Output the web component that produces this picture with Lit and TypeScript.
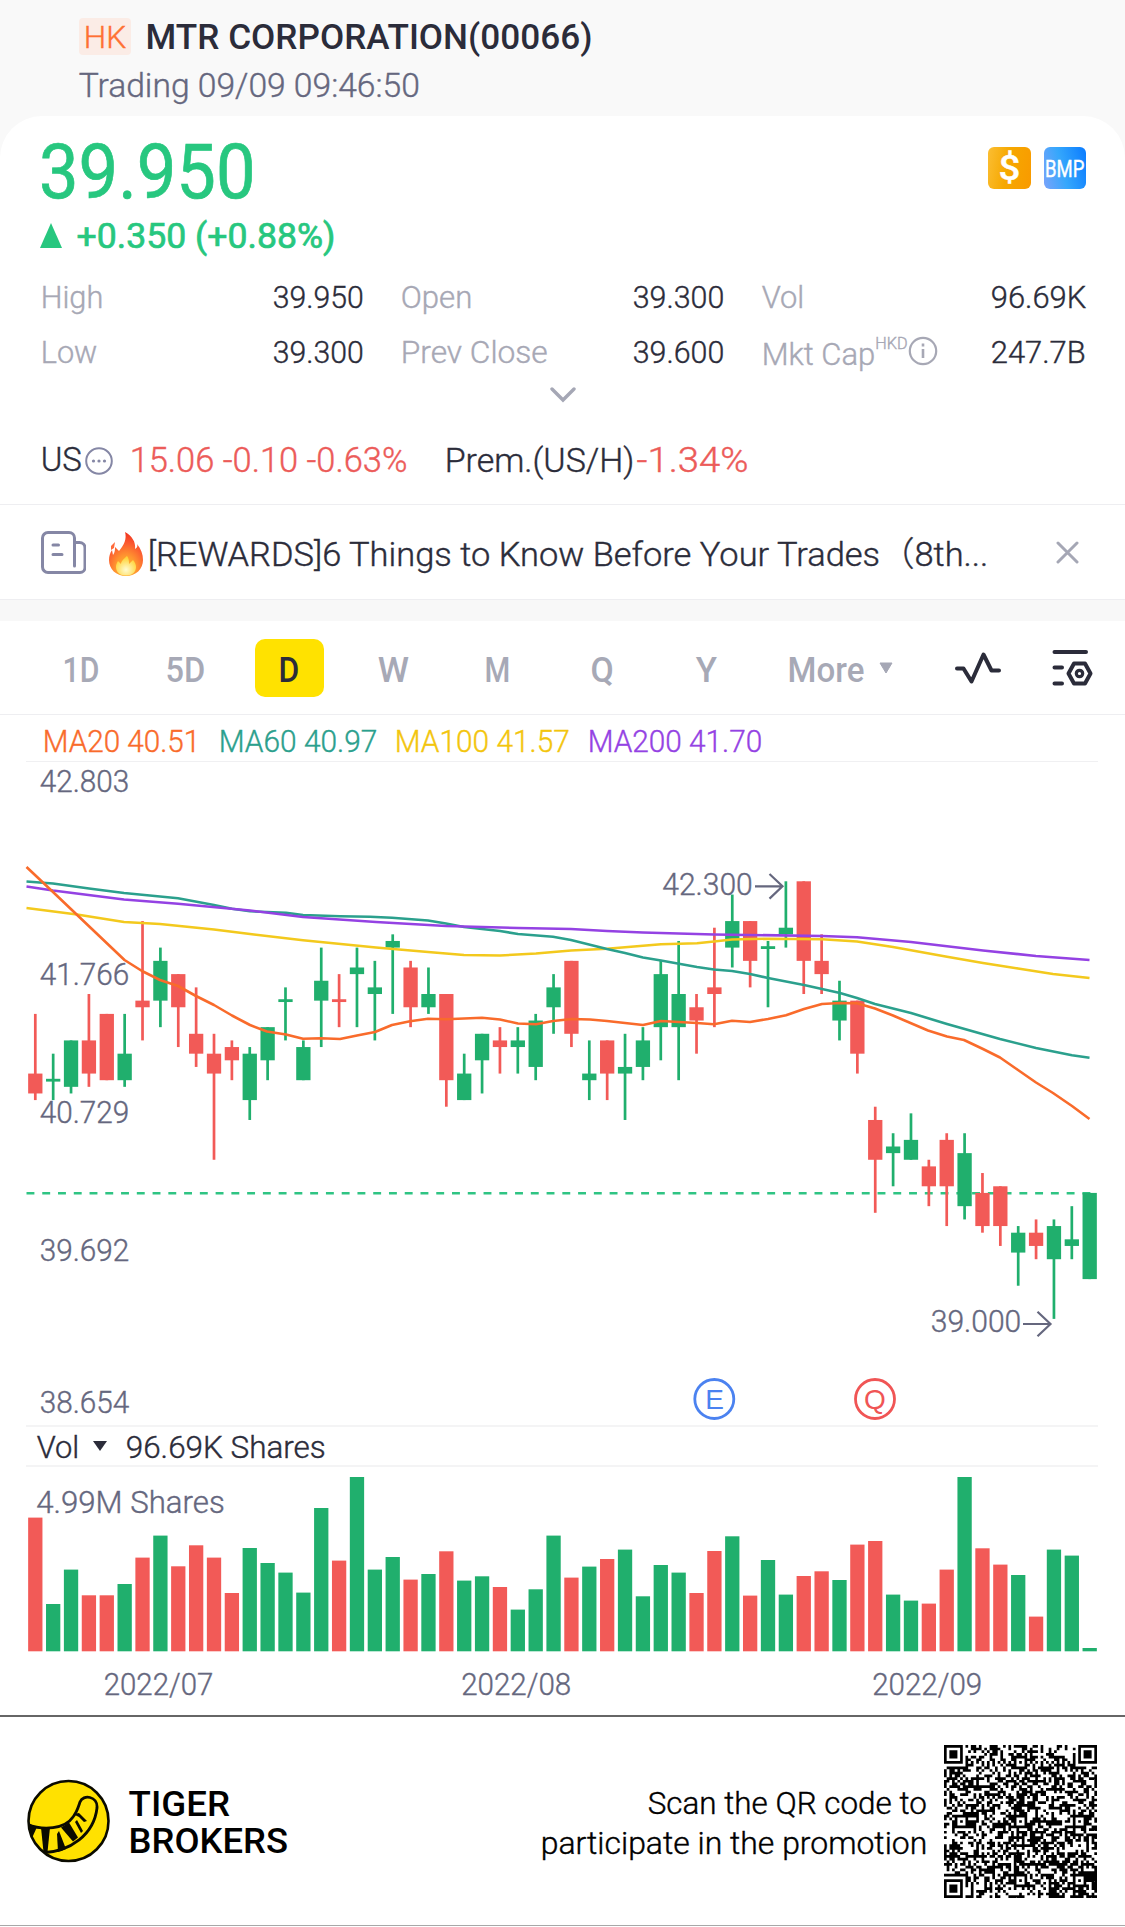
import { html, svg, css, LitElement } from 'lit';
import { customElement, property, state } from 'lit/decorators.js';
import { classMap } from 'lit/directives/class-map.js';

// share of the em taken by capitals
const CAP = 0.711;

// One line of text squeezed to a given ink width; its box is exactly the cap height.
function fit(text: string, width: number, cap: number) {
  const size = cap / CAP;
  const bearing = size * 0.04;
  return html`<svg class="fit" width=${width} height=${cap}>
    <text
      x=${-bearing}
      y=${cap}
      font-size=${size}
      textLength=${width + bearing * 2}
      lengthAdjust="spacingAndGlyphs"
    >${text}</text>
  </svg>`;
}

// Same squeeze, for labels placed inside a chart
function label(text: string, x: number, base: number, width: number, cap = 22.5) {
  const size = cap / CAP;
  const bearing = size * 0.04;
  return svg`<text class="label" x=${x - bearing} y=${base} font-size=${size}
    textLength=${width + bearing * 2} lengthAdjust="spacingAndGlyphs">${text}</text>`;
}

const fitStyles = css`
  .fit {
    display: block;
    flex: none;
    overflow: visible;
  }

  .fit text {
    fill: currentColor;
    stroke: currentColor;
    stroke-width: 0.4;
    white-space: pre;
  }
`;

// [color, high, body top, body bottom, low, volume bar]
type Candle = [string, number, number, number, number, number];

const CANDLES: Candle[] = [
  ['r', 41.3, 40.85, 40.7, 40.65, 133.7],
  ['g', 41.0, 40.8, 40.8, 40.65, 47.3],
  ['g', 41.1, 41.1, 40.75, 40.7, 81.7],
  ['r', 41.45, 41.1, 40.85, 40.75, 56],
  ['r', 41.3, 41.3, 40.8, 40.8, 56],
  ['g', 41.3, 41.0, 40.8, 40.75, 67.3],
  ['r', 42.0, 41.4, 41.35, 41.1, 93.7],
  ['g', 41.8, 41.7, 41.4, 41.2, 115.7],
  ['r', 41.6, 41.6, 41.35, 41.05, 85],
  ['r', 41.5, 41.15, 41.0, 40.9, 106],
  ['r', 41.15, 41.0, 40.85, 40.2, 93.7],
  ['r', 41.1, 41.05, 40.95, 40.8, 58.3],
  ['g', 41.05, 41.0, 40.65, 40.5, 103.3],
  ['g', 41.2, 41.2, 40.95, 40.8, 88.3],
  ['g', 41.5, 41.4, 41.4, 41.1, 78.7],
  ['g', 41.1, 41.05, 40.8, 40.8, 58.7],
  ['g', 41.8, 41.55, 41.4, 41.05, 143.3],
  ['r', 41.6, 41.4, 41.4, 41.2, 90.7],
  ['g', 41.8, 41.65, 41.6, 41.2, 174.3],
  ['g', 41.7, 41.5, 41.45, 41.1, 81.7],
  ['g', 41.9, 41.85, 41.8, 41.3, 94.3],
  ['r', 41.7, 41.65, 41.35, 41.2, 71.7],
  ['g', 41.65, 41.45, 41.35, 41.3, 77.3],
  ['r', 41.45, 41.45, 40.8, 40.6, 100],
  ['g', 41.0, 40.85, 40.65, 40.65, 70.7],
  ['g', 41.15, 41.15, 40.95, 40.7, 75],
  ['r', 41.2, 41.1, 41.05, 40.85, 64.3],
  ['g', 41.2, 41.1, 41.05, 40.85, 41.7],
  ['g', 41.3, 41.25, 40.9, 40.8, 62],
  ['g', 41.6, 41.5, 41.35, 41.15, 115.7],
  ['r', 41.7, 41.7, 41.15, 41.05, 73.7],
  ['g', 41.1, 40.85, 40.8, 40.65, 84.7],
  ['r', 41.1, 41.1, 40.85, 40.65, 92.3],
  ['g', 41.15, 40.9, 40.85, 40.5, 101.7],
  ['g', 41.2, 41.1, 40.9, 40.8, 55],
  ['g', 41.7, 41.6, 41.2, 40.95, 86.3],
  ['g', 41.85, 41.45, 41.2, 40.8, 78.7],
  ['r', 41.45, 41.35, 41.25, 41.0, 58.3],
  ['r', 41.95, 41.5, 41.45, 41.2, 100.3],
  ['g', 42.2, 42.0, 41.8, 41.65, 115],
  ['r', 42.0, 42.0, 41.7, 41.5, 55.7],
  ['g', 41.85, 41.8, 41.8, 41.35, 91.3],
  ['g', 42.3, 41.95, 41.9, 41.8, 56.7],
  ['r', 42.3, 42.3, 41.7, 41.45, 75.3],
  ['r', 41.9, 41.7, 41.6, 41.45, 80],
  ['g', 41.55, 41.4, 41.25, 41.1, 71.3],
  ['r', 41.4, 41.4, 41.0, 40.85, 106.7],
  ['r', 40.6, 40.5, 40.2, 39.8, 110.3],
  ['g', 40.4, 40.3, 40.25, 40.0, 56.7],
  ['g', 40.55, 40.35, 40.2, 40.2, 50.7],
  ['r', 40.2, 40.15, 40.0, 39.85, 47.7],
  ['r', 40.4, 40.35, 40.0, 39.7, 81.7],
  ['g', 40.4, 40.25, 39.85, 39.75, 174.3],
  ['r', 40.1, 39.95, 39.7, 39.65, 103],
  ['r', 40.0, 40.0, 39.7, 39.55, 86.7],
  ['g', 39.7, 39.65, 39.5, 39.25, 76.3],
  ['r', 39.75, 39.65, 39.55, 39.45, 34.7],
  ['g', 39.75, 39.7, 39.45, 39.0, 101.7],
  ['g', 39.85, 39.6, 39.55, 39.45, 95.7],
  ['g', 39.95, 39.95, 39.3, 39.3, 3.3],
];

const AVERAGES = [
  {
    color: '#f3c91d',
    points:
      '26.5,908 77,914.5 124,922 160,924 214,929.5 250,934 303,940.3 376,947.5 428,952 464,955 500,955.5 536,953.5 571,950.5 607,948.8 661,944.3 697,943.3 714,941.5 732,939.5 768,938.7 822,939.3 857,941.5 893,947 947,956.7 983,963 1018,968.5 1053,974 1089.5,978',
  },
  {
    color: '#2ba08d',
    points:
      '26.5,881.5 53,883.5 89,888.5 124,893 178,898.3 214,905 232,908.7 250,911.3 286,912.7 303,915 340,916.3 370,916.7 392,917.7 428,920.5 446,923.5 464,927 500,931 518,934 553,936.8 571,940 607,949 625,953 643,957.5 661,960.5 697,967 714,969.5 732,971 750,974 768,978 804,985 840,993 857,998 875,1004 911,1013 947,1024 1000,1039 1036,1048 1072,1055.3 1089.5,1057.7',
  },
  {
    color: '#9442e3',
    points:
      '26.5,886.5 53,890.5 124,899.5 178,903.8 250,910.5 303,917 376,922 446,926 518,928 571,929 607,931 643,932.5 714,934.5 822,936 857,937.3 911,942 983,950.5 1036,956 1089.5,960',
  },
  {
    color: '#f96b2b',
    points:
      '26.5,867 35,875 53,892 124.5,960 142,971 160,980 178,986 196,996 214,1005 232,1015.5 250,1025 267,1031.5 286,1034.5 303,1038.8 321,1038.3 340,1039 357,1035.5 375,1032 392,1025 410,1021.3 428,1018.8 446,1019.3 482,1017.8 500,1019.5 518,1023.5 536,1024.3 553,1021 572,1019 590,1019.5 607,1021 643,1025 661,1021 679,1022 697,1023 714,1024.3 732,1020.7 750,1022 768,1019 786,1015.3 804,1009 822,1004 840,1003 857,1003.2 875,1008.5 893,1015.5 928,1030.5 947,1036.5 964,1040 983,1049 1000,1057.5 1018,1070 1036,1082.5 1053,1093 1072,1106 1089.5,1119',
  },
];

const candleX = (i: number) => 35.3 + i * 17.871;
const priceY = (p: number) => 881.3 + (42.3 - p) * 132.6;

const chartStyles = css`
  :host {
    display: block;
  }

  svg {
    display: block;
  }

  .label {
    fill: #65677e;
    stroke: #65677e;
    stroke-width: 0.4;
  }

  .r {
    fill: #f25a57;
  }

  .g {
    fill: #20af6d;
  }
`;

@customElement('price-chart')
export class PriceChart extends LitElement {
  static styles = [
    chartStyles,
    css`
      .average {
        fill: none;
        stroke-width: 2.6;
        stroke-linejoin: round;
      }

      .arrow {
        fill: none;
        stroke: #65677e;
        stroke-width: 2.2;
      }

      .badge circle {
        fill: none;
        stroke: currentColor;
        stroke-width: 2.8;
      }

      .badge text {
        fill: currentColor;
        font: 28px 'Liberation Sans', Arial, sans-serif;
        text-anchor: middle;
      }

      .earnings {
        color: #4b82f0;
      }

      .quarter {
        color: #f05555;
      }
    `,
  ];

  render() {
    return html`
      <svg width="1125" height="663" viewBox="0 762 1125 663">
        ${label('42.803', 41, 792, 87)}
        ${label('41.766', 41, 985, 87)}
        ${label('40.729', 41, 1123, 87)}
        ${label('39.692', 41, 1261, 87)}
        ${label('38.654', 41, 1412.5, 87)}
        <line x1="26.5" x2="1096" y1="1193.2" y2="1193.2" stroke="#2fc483" stroke-width="2.6" stroke-dasharray="7.9 7.86" />
        ${CANDLES.map(([color, high, top, bottom, low], i) => {
          // a flat day still shows a thin body
          const height = Math.max((top - bottom) * 132.6, 2.8);
          const y = top === bottom ? priceY(top) - 1.4 : priceY(top);
          return svg`
            <rect class=${color} x=${candleX(i) - 1.35} y=${priceY(high)} width="2.7" height=${priceY(low) - priceY(high)} />
            <rect class=${color} x=${candleX(i) - 7.15} y=${y} width="14.3" height=${height} />`;
        })}
        ${AVERAGES.map((a) => svg`<polyline class="average" stroke=${a.color} points=${a.points} />`)}
        ${label('42.300', 663.5, 895, 88)}
        <path class="arrow" d="M755 886.3h27M769.5 874l13 12.3-13 12.3" />
        ${label('39.000', 932, 1332, 88)}
        <path class="arrow" d="M1023 1324h27M1037.5 1311.7l13 12.3-13 12.3" />
        <g class="badge earnings"><circle cx="714.3" cy="1399" r="19.5" /><text x="714.6" y="1409">E</text></g>
        <g class="badge quarter"><circle cx="875" cy="1399" r="19.5" /><text x="875" y="1408.5">Q</text></g>
      </svg>
    `;
  }
}

@customElement('volume-chart')
export class VolumeChart extends LitElement {
  static styles = chartStyles;

  render() {
    return html`
      <svg width="1125" height="248" viewBox="0 1467 1125 248">
        ${label('4.99M Shares', 37.5, 1513, 186)}
        ${CANDLES.map(
          (c, i) =>
            svg`<rect class=${c[0]} x=${candleX(i) - 7.15} y=${1651.3 - c[5]} width="14.3" height=${c[5]} />`
        )}
        ${label('2022/07', 105, 1695, 107)}
        ${label('2022/08', 462.5, 1695, 107.5)}
        ${label('2022/09', 873.5, 1695, 107.5)}
      </svg>
    `;
  }
}

@customElement('qr-code')
export class QrCode extends LitElement {
  static styles = css`
    :host {
      display: block;
    }

    svg {
      display: block;
    }
  `;

  @property({ type: Number }) modules = 57;

  // Finder, alignment and timing modules; undefined where data goes
  private fixed(x: number, y: number): boolean | undefined {
    const n = this.modules;
    for (const [fx, fy] of [[0, 0], [n - 7, 0], [0, n - 7]]) {
      const d = Math.max(Math.abs(x - fx - 3), Math.abs(y - fy - 3));
      if (d <= 4) return d === 3 || d <= 1;
    }
    const spots = [6, 28, n - 7];
    for (const ax of spots) {
      for (const ay of spots) {
        const d = Math.max(Math.abs(x - ax), Math.abs(y - ay));
        if (d <= 2) return d !== 1;
      }
    }
    if (x === 6 || y === 6) return (x + y) % 2 === 0;
    return undefined;
  }

  render() {
    const n = this.modules;
    let seed = 66;
    let path = '';
    for (let y = 0; y < n; y++) {
      for (let x = 0; x < n; x++) {
        seed = (seed * 1103515245 + 12345) % 2147483648;
        if (this.fixed(x, y) ?? seed / 2147483648 > 0.47) path += `M${x} ${y}h1v1h-1z`;
      }
    }
    return html`<svg width="153" height="153" viewBox="0 0 ${n} ${n}"><path d=${path} /></svg>`;
  }
}

@customElement('app-root')
export class AppRoot extends LitElement {
  static styles = [
    fitStyles,
    css`
      :host {
        display: block;
        width: 1125px;
        height: 1927px;
        overflow: hidden;
        box-sizing: border-box;
        background: #fff;
        color: #2b2c3a;
        font-family: Roboto, 'Liberation Sans', 'Noto Sans CJK SC', sans-serif;
        font-weight: 300;
      }

      svg {
        display: block;
        flex: none;
      }

      header {
        height: 158px;
        margin-bottom: -42px;
        padding: 18px 0 0 79px;
        box-sizing: border-box;
        background: #f9f9f9;
      }

      .row {
        display: flex;
        align-items: center;
      }

      .title {
        gap: 16px;
        font-weight: 500;
      }

      .title > .fit {
        margin-top: -2px;
      }

      .title > .fit text {
        stroke: none;
      }

      .market {
        display: flex;
        align-items: center;
        justify-content: center;
        width: 52px;
        height: 37px;
        border-radius: 4px;
        background: #fbece6;
        color: #ff7033;
        font-weight: 300;
      }

      .status {
        margin: 18px 0 0 1px;
        color: #65677e;
      }

      .quote {
        height: 388px;
        padding: 28px 40px 0 42px;
        box-sizing: border-box;
        border-radius: 42px 42px 0 0;
        background: #fff;
      }

      .top {
        display: flex;
        justify-content: space-between;
        align-items: flex-start;
      }

      .up {
        color: #27c77f;
        font-weight: 400;
      }

      .up .fit text {
        stroke-width: 0.7;
      }

      .down {
        color: #ec5b59;
      }

      .tags {
        display: flex;
        gap: 13px;
        margin: 2.5px -1px 0 0;
      }

      .tag {
        display: flex;
        align-items: center;
        justify-content: center;
        width: 42.5px;
        height: 42.5px;
        border-radius: 6px;
        color: #fff;
      }

      .cash {
        background: linear-gradient(100deg, #fbbe33, #f6a800 45%, #f99a00);
        font-weight: 500;
      }

      .bmp {
        background: linear-gradient(75deg, #7aa3fa, #35a7fc 45%, #0a7bff);
        font-weight: 400;
      }

      .change {
        gap: 16px;
        margin: 25.5px 0 0 -2px;
      }

      .change .fit {
        margin-top: -1px;
      }

      .stats {
        display: grid;
        grid-template-columns: 320px 321.5px 322px;
        column-gap: 39.5px;
        row-gap: 32.5px;
        margin-top: 37px;
      }

      .stat {
        display: flex;
        justify-content: space-between;
        height: 22.5px;
      }

      .name {
        display: flex;
        color: #a7a8b5;
      }

      .cap {
        margin-top: 2px;
        gap: 2px;
        align-items: flex-start;
      }

      .cap .fit + .fit {
        margin-top: -5.5px;
      }

      .cap .info {
        margin: -6.5px 0 0 -1px;
      }

      .chevron {
        margin: 24px 0 0 507.5px;
      }

      .related {
        margin-top: 41px;
      }

      .related .more {
        margin: 3px 18px 0 4px;
      }

      .related .prem {
        margin: 1px 5px 0 40px;
      }

      .news {
        height: 96px;
        padding: 0 46.5px 0 41px;
        box-sizing: border-box;
        border-top: 1.5px solid #eeeef1;
        border-bottom: 1.5px solid #eeeef1;
      }

      .news .fire {
        margin: 3px 6px 0 23px;
      }

      .news .fit {
        margin-top: 4px;
      }

      .news .close {
        margin-left: auto;
      }

      .band {
        height: 20.5px;
        background: #f8f8f8;
      }

      .tabs {
        height: 94px;
        padding: 2px 0 0 29px;
        box-sizing: border-box;
        border-bottom: 1.5px solid #eeeef1;
        color: #a7a9b6;
        font-weight: 500;
      }

      .tabs .fit text {
        stroke: none;
      }

      .tab {
        display: flex;
        align-items: center;
        justify-content: center;
        width: 104.2px;
      }

      .pill {
        display: flex;
        align-items: center;
        justify-content: center;
        width: 68.5px;
        height: 58.5px;
        padding-top: 2px;
        box-sizing: border-box;
        border-radius: 10px;
      }

      .active .pill {
        background: #ffe200;
        color: #2b2c3a;
      }

      .tabs .menu {
        gap: 16px;
        margin: 0 61.5px 0 31px;
      }

      .menu .fit {
        margin-top: 2px;
      }

      .legend {
        height: 47.5px;
        margin: 0 27px 0 26px;
        padding: 5px 0 0 18px;
        box-sizing: border-box;
        border-bottom: 1.5px solid #f0f0f2;
      }

      .legend .fit {
        margin-right: 20.5px;
      }

      .ma20 { color: #f96b2b; }
      .ma60 { color: #2ba08d; }
      .ma100 { color: #f3c50d; }
      .ma200 { color: #9442e3; }

      .volume {
        height: 42px;
        margin: 0 27px 0 26px;
        padding-left: 11.5px;
        box-sizing: border-box;
        border-top: 2px solid #f4f4f5;
        border-bottom: 2px solid #f4f4f5;
      }

      .volume .caret {
        margin: 0 20px 0 15.5px;
      }

      footer {
        display: flex;
        align-items: center;
        height: 211px;
        padding: 0 28.5px 0 27px;
        box-sizing: border-box;
        border-top: 2px solid #666;
        border-bottom: 1px solid #a8a8a8;
        color: #000;
      }

      .brand {
        display: grid;
        gap: 12px;
        margin-left: 20px;
        font-weight: 500;
      }

      .brand .fit text {
        stroke: none;
      }

      .scan {
        display: grid;
        justify-items: end;
        gap: 18px;
        margin: 2px 18px 0 auto;
      }
    `,
  ];

  @state() private period = 'D';

  private tabs: [string, number][] = [
    ['1D', 34],
    ['5D', 37],
    ['D', 18],
    ['W', 28.5],
    ['M', 23],
    ['Q', 20.5],
    ['Y', 18.5],
  ];

  private stat(name: string, nameWidth: number, value: string, width: number) {
    return html`<div class="stat">
      <div class="name">${fit(name, nameWidth, 22.5)}</div>
      ${fit(value, width, 22.5)}
    </div>`;
  }

  private renderQuote() {
    return html`
      <section class="quote">
        <div class="top">
          <div class="up">${fit('39.950', 210.5, 53.5)}</div>
          <div class="tags">
            <div class="tag cash">${fit('$', 19, 25)}</div>
            <div class="tag bmp">${fit('BMP', 37.5, 16.5)}</div>
          </div>
        </div>
        <div class="row change up">
          <svg width="22" height="25"><path d="M11 0L22 25H0z" fill="currentColor" /></svg>
          ${fit('+0.350 (+0.88%)', 256, 25)}
        </div>
        <div class="stats">
          ${this.stat('High', 60, '39.950', 88.5)}
          ${this.stat('Open', 69, '39.300', 89)}
          ${this.stat('Vol', 40, '96.69K', 93)}
          ${this.stat('Low', 54, '39.300', 88.5)}
          ${this.stat('Prev Close', 144.5, '39.600', 89)}
          <div class="stat">
            <div class="name cap">
              ${fit('Mkt Cap', 111, 22.5)} ${fit('HKD', 31, 11.5)}
              <svg class="info" width="30" height="30" fill="none" stroke="currentColor" stroke-width="2.2">
                <circle cx="15" cy="15" r="13.2" />
                <path d="M15 13v9M15 7.5v3" stroke-width="2.6" />
              </svg>
            </div>
            ${fit('247.7B', 92.5, 22.5)}
          </div>
        </div>
        <svg class="chevron" width="26" height="16" fill="none" stroke="#a5a7b5" stroke-width="3.4">
          <path d="M2 2l11 11L24 2" stroke-linecap="round" />
        </svg>
        <div class="row related">
          ${fit('US', 38.5, 24)}
          <svg class="more" width="28" height="28" fill="#8587a5">
            <circle cx="14" cy="14" r="12.8" fill="none" stroke="#8587a5" stroke-width="2" />
            <circle cx="8.5" cy="14" r="1.6" />
            <circle cx="14" cy="14" r="1.6" />
            <circle cx="19.5" cy="14" r="1.6" />
          </svg>
          <div class="down">${fit('15.06 -0.10 -0.63%', 275, 24.5)}</div>
          <div class="prem">${fit('Prem.(US/H)', 187, 24)}</div>
          <div class="down">${fit('-1.34%', 109, 25)}</div>
        </div>
      </section>
    `;
  }

  private renderNews() {
    return html`
      <section class="row news">
        <svg width="45" height="43" fill="none" stroke="#8587a5" stroke-width="3" stroke-linecap="round">
          <path d="M33.5 35V7a5.5 5.5 0 0 0-5.5-5.5H7A5.5 5.5 0 0 0 1.5 7v29A5.5 5.5 0 0 0 7 41.5h32a5 5 0 0 0 5-5V17a5.5 5.5 0 0 0-5.5-5.5h-5" />
          <path d="M12 14h5.5M12 23.5h9" />
        </svg>
        <svg class="fire" width="34" height="44" viewBox="0 0 34 44">
          <defs>
            <radialGradient id="flame" cx=".5" cy=".85" r=".8">
              <stop offset="0" stop-color="#ffc629" />
              <stop offset=".4" stop-color="#ff9430" />
              <stop offset=".75" stop-color="#fb5a30" />
              <stop offset="1" stop-color="#f23a22" />
            </radialGradient>
            <radialGradient id="core" cx=".5" cy=".7" r=".6">
              <stop offset="0" stop-color="#fffbd0" />
              <stop offset="1" stop-color="#ffd43a" />
            </radialGradient>
          </defs>
          <path
            fill="url(#flame)"
            d="M16 0c7 4 11 10 10 17 2-1 3-3 2-5 4 5 6 10 6 16 0 9-7 16-17 16S0 37 0 28c0-4 1-7 3-10l1 5c2-3 2-5 2-8l4 4C15 13 18 7 16 0z"
          />
          <path fill="#ff6a3a" d="M2 14l4-4-1 6-3 2z" />
          <path
            fill="url(#core)"
            d="M18 24c2 3 2 5 2 8l4-4c2 2 3 5 3 7 0 5-4 8.5-10 8.5S7 40 7 35c0-3 1-4 2-6l3 3c0-3 3-5 6-8z"
          />
        </svg>
        ${fit('[REWARDS]6 Things to Know Before Your Trades（8th...', 838, 24)}
        <svg class="close" width="23" height="23" stroke="#a5a7b5" stroke-width="3" stroke-linecap="round">
          <path d="M2 2l19 19M21 2L2 21" />
        </svg>
      </section>
    `;
  }

  private renderTabs() {
    return html`
      <nav class="row tabs">
        ${this.tabs.map(
          ([name, width]) => html`
            <div class=${classMap({ tab: true, active: name === this.period })} @click=${() => (this.period = name)}>
              <div class="pill">${fit(name, width, 24.5)}</div>
            </div>
          `
        )}
        <div class="row menu">
          ${fit('More', 74, 24.5)}
          <svg width="14" height="12" fill="#a5a7b5"><path d="M1 1h12L7 11z" stroke="#a5a7b5" stroke-linejoin="round" /></svg>
        </div>
        <svg width="46" height="36" fill="none" stroke="#2b2c3a" stroke-width="4" stroke-linecap="round" stroke-linejoin="round">
          <path d="M2 18.5h6.500l8 13L28.500 4.500l8 16H44" />
        </svg>
        <svg width="92" height="36" fill="none" stroke="#2b2c3a" stroke-width="4" stroke-linecap="round" stroke-linejoin="round">
          <path d="M53.5 2H85M53.5 17.5h7.5M53.5 33.5h7.5" />
          <path d="M73 13.5h11l5.5 10-5.5 10H73l-5.5-10z" />
          <circle cx="78.5" cy="23.5" r="3.2" stroke-width="3.2" />
        </svg>
      </nav>
    `;
  }

  private renderFooter() {
    return html`
      <footer>
        <svg width="83" height="90" viewBox="0 0 83 90">
          <defs><clipPath id="disc"><circle cx="41.5" cy="45" r="40" /></clipPath></defs>
          <circle cx="41.5" cy="45" r="40" fill="#ffe100" />
          <g clip-path="url(#disc)" stroke="#0b0b00" fill="none">
            <path
              stroke-width="2.8"
              d="M0 48C16 55 38 53 46 41c4-5 5-9 7-15 3-8 18-6 17 6C67 58 44 76 14 77"
            />
            <g fill="#0b0b00" stroke="none">
              <path d="M0 47l10 4-5 11z" />
              <path d="M14 51.5h9L20.5 76h-4z" />
              <path d="M30 58l2-3 7 18-8 3z" />
              <path d="M34 51.5l8-5 9 15-5 4z" />
              <path d="M46 38l6-1 8 8-3 1-5-5z" />
              <path d="M48 46l2-2 6 11-2 2z" />
            </g>
          </g>
          <circle cx="41.5" cy="45" r="40" fill="none" stroke="#0b0b00" stroke-width="2.6" />
        </svg>
        <div class="brand">
          ${fit('TIGER', 98.5, 25.5)}
          ${fit('BROKERS', 156.5, 25.5)}
        </div>
        <div class="scan">
          ${fit('Scan the QR code to', 276.5, 22.5)}
          ${fit('participate in the promotion', 384, 22.5)}
        </div>
        <qr-code></qr-code>
      </footer>
    `;
  }

  render() {
    return html`
      <header>
        <div class="row title">
          <div class="market">${fit('HK', 40, 22)}</div>
          ${fit('MTR CORPORATION(00066)', 444, 25.5)}
        </div>
        <div class="status">${fit('Trading 09/09 09:46:50', 338.5, 24)}</div>
      </header>
      ${this.renderQuote()}
      ${this.renderNews()}
      <div class="band"></div>
      ${this.renderTabs()}
      <div class="row legend">
        <div class="ma20">${fit('MA20 40.51', 155, 22.5)}</div>
        <div class="ma60">${fit('MA60 40.97', 156, 22.5)}</div>
        <div class="ma100">${fit('MA100 41.57', 172.5, 22.5)}</div>
        <div class="ma200">${fit('MA200 41.70', 172, 22.5)}</div>
      </div>
      <price-chart></price-chart>
      <div class="row volume">
        ${fit('Vol', 40, 22.5)}
        <svg class="caret" width="14" height="12" fill="#2b2c3a"><path d="M0 1h14L7 11z" /></svg>
        ${fit('96.69K Shares', 197.5, 22.5)}
      </div>
      <volume-chart></volume-chart>
      ${this.renderFooter()}
    `;
  }
}
